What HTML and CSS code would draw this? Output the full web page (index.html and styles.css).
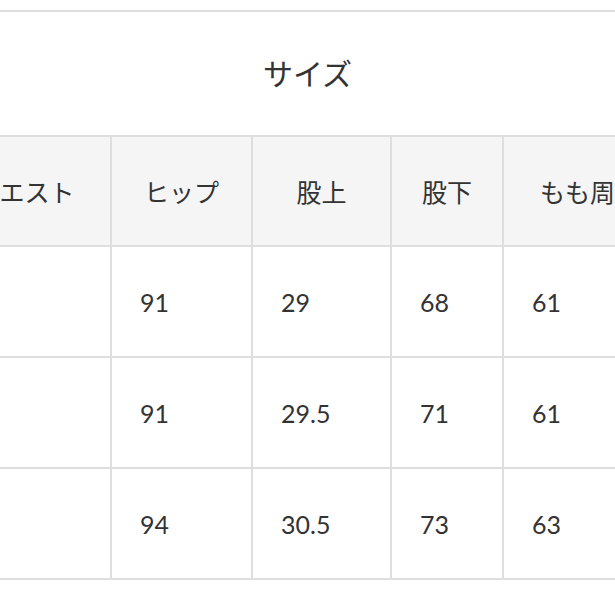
FILE: index.html
```html
<!DOCTYPE html>
<html lang="ja">
<head>
<meta charset="utf-8">
<title>サイズ</title>
<link rel="stylesheet" href="styles.css">
</head>
<body>
<section class="size-section">
  <h2 class="size-title">サイズ</h2>
  <div class="table-wrap">
    <table class="size-table">
      <thead>
        <tr>
          <th class="c1">ウエスト</th>
          <th class="c2">ヒップ</th>
          <th class="c3">股上</th>
          <th class="c4">股下</th>
          <th class="c5">もも周り</th>
        </tr>
      </thead>
      <tbody>
        <tr><td class="c1">68</td><td class="c2">91</td><td class="c3">29</td><td class="c4">68</td><td class="c5">61</td></tr>
        <tr><td class="c1">70</td><td class="c2">91</td><td class="c3">29.5</td><td class="c4">71</td><td class="c5">61</td></tr>
        <tr><td class="c1">74</td><td class="c2">94</td><td class="c3">30.5</td><td class="c4">73</td><td class="c5">63</td></tr>
      </tbody>
    </table>
  </div>
</section>
</body>
</html>
```
FILE: styles.css
```css
html, body {
  margin: 0;
  padding: 0;
  background: #ffffff;
}
body {
  font-family: "Lato", "Noto Sans CJK JP", sans-serif;
  color: #333333;
  overflow: hidden;
}
.size-section {
  margin-top: 10px;
  border-top: 2px solid #dedede;
}
.size-title {
  margin: 0;
  box-sizing: border-box;
  height: 123px;
  padding-bottom: 4px;
  display: flex;
  align-items: center;
  justify-content: center;
  font-family: "Noto Sans CJK JP", sans-serif;
  font-weight: 400;
  font-size: 30px;
  color: #333333;
}
.table-wrap {
  overflow: hidden;
  width: 615px;
}
.size-table {
  margin-left: -61px;
  table-layout: fixed;
  border-collapse: separate;
  border-spacing: 0;
  border-top: 2px solid #dedede;
  width: 739px;
}
.size-table th,
.size-table td {
  box-sizing: border-box;
  border-right: 2px solid #dedede;
  border-bottom: 2px solid #dedede;
  padding: 0 0 0 28px;
  font-size: 25px;
  font-weight: 400;
  vertical-align: middle;
}
.size-table th {
  height: 110px;
  background: #f5f5f5;
  text-align: center;
  padding: 0;
  font-family: "Noto Sans CJK JP", sans-serif;
  color: #333333;
}
.size-table td {
  height: 111px;
  text-align: left;
  font-family: "Lato", "Noto Sans CJK JP", sans-serif;
  color: #333333;
}
.c1 { width: 173px; }
.c2 { width: 141px; }
.c3 { width: 139px; }
.c4 { width: 112px; }
.c5 { width: 174px; }
```
